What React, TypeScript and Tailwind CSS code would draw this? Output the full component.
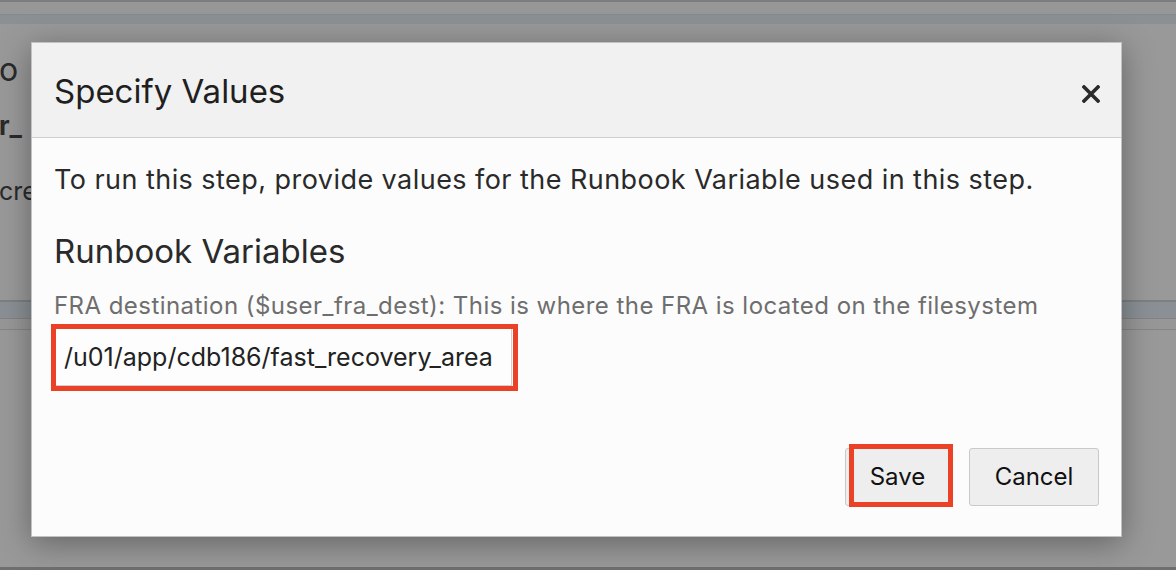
export default function App() {
  return (
    <div className="relative h-[570px] w-[1176px] overflow-hidden bg-[#999999] font-['Inter',sans-serif]">
      {/* dimmed page behind the modal */}
      <div className="flex h-full flex-col">
        <div className="h-[2px] bg-[#7d7d7d]" />
        <div className="h-[12px] bg-[#979797]" />
        <div className="h-[10px] border-t border-[#86898c] bg-[#8b9094]" />
        <div className="flex h-[276px] flex-col bg-[#999999] pt-[26px] text-[#2a2a2a]">
          <div className="-ml-[1px] text-[32px] leading-[40px]">o</div>
          <div className="-ml-[1px] mt-[20px] text-[26px] font-bold leading-[32px]">r_</div>
          <div className="-ml-[1px] mt-[34px] text-[25px] leading-[30px]">cre</div>
        </div>
        <div className="h-[2px] bg-[#7f7f7f]" />
        <div className="h-[16px] bg-[#8a9095]" />
        <div className="h-[1px] bg-[#828282]" />
        <div className="h-[10px] bg-[#979797]" />
        <div className="h-[1px] bg-[#858585]" />
        <div className="flex-1 bg-[#999999]" />
        <div className="h-[3px] bg-[#6f6f6f]" />
      </div>

      {/* modal */}
      <div className="absolute left-[31px] top-[42px] flex h-[495px] w-[1091px] flex-col border border-[#c2c2c2] bg-[#fcfcfc] shadow-[0_6px_30px_rgba(0,0,0,0.35)]">
        <div className="flex h-[95px] items-center justify-between border-b border-[#cfcfcf] bg-[#f1f1f1] pl-[22px] pr-[21px]">
          <h1 className="mt-[2px] text-[33px] leading-[40px] text-[#1f1f1f]">Specify Values</h1>
          <svg width="18" height="18" viewBox="0 0 18 18" className="mt-[7px]">
            <path d="M2 2 L16 16 M16 2 L2 16" stroke="#2b2b2b" strokeWidth="3.6" strokeLinecap="square" />
          </svg>
        </div>

        <div className="flex flex-1 flex-col px-[22px]">
          <p className="mt-[26px] text-[27px] leading-[32px] tracking-[0.45px] text-[#2a2a2a]">
            To run this step, provide values for the Runbook Variable used in this step.
          </p>
          <h2 className="mt-[35px] text-[33px] leading-[40px] text-[#2a2a2a]">Runbook Variables</h2>
          <div className="mt-[20px] text-[24px] leading-[30px] tracking-[0.45px] text-[#6e6e6e]">
            FRA destination ($user_fra_dest): This is where the FRA is located on the filesystem
          </div>
          <div className="relative mt-[5px] w-[458px]">
            <div className="flex h-[60px] items-center border border-[#d0d0d0] bg-[#fdfdfd] pl-[9px] pt-[4px] text-[25px] text-[#222222]">
              /u01/app/cdb186/fast_recovery_area
            </div>
            <div className="absolute -bottom-[5px] -left-[3px] -right-[6px] -top-[2px] border-[5px] border-[#ea4127]" />
          </div>

          <div className="mt-auto mb-[30px] flex justify-end gap-[19px]">
            <div className="relative">
              <button className="h-[58px] w-[105px] rounded-[3px] border border-[#c9c9c9] bg-[#eeeeee] text-[24px] text-[#111111]">
                Save
              </button>
              <div className="absolute -bottom-[1px] -right-[3px] -top-[4px] left-[4px] border-[5px] border-[#ea4127]" />
            </div>
            <button className="h-[58px] w-[130px] rounded-[3px] border border-[#c9c9c9] bg-[#eeeeee] text-[24px] text-[#111111]">
              Cancel
            </button>
          </div>
        </div>
      </div>
    </div>
  );
}
